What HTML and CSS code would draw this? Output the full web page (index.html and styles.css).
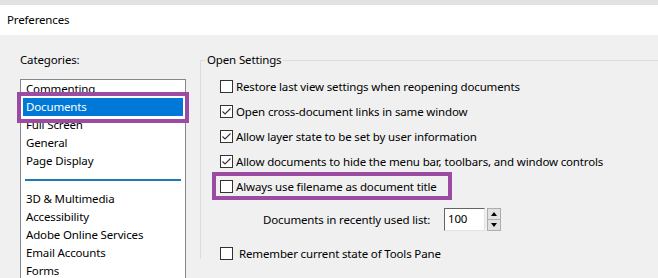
FILE: index.html
```html
<!DOCTYPE html>
<html lang="en">
<head>
    <meta charset="UTF-8">
    <meta name="viewport" content="width=device-width, initial-scale=1.0">
    <title>Preferences</title>
    <link rel="stylesheet" href="styles.css">
</head>
<body>
    <div class="top-strip"></div>
    <div class="title-bar">Preferences</div>

    <div class="dialog">
        <div class="categories">
            <div class="cat-label">Categories:</div>
            <ul class="cat-list">
                <li>Commenting</li>
                <li class="selected">Documents</li>
                <li>Full Screen</li>
                <li>General</li>
                <li>Page Display</li>
                <li class="sep"></li>
                <li>3D &amp; Multimedia</li>
                <li>Accessibility</li>
                <li>Adobe Online Services</li>
                <li>Email Accounts</li>
                <li>Forms</li>
            </ul>
        </div>

        <fieldset class="group">
            <legend>Open Settings</legend>

            <label class="row">
                <span class="box"></span>
                <span>Restore last view settings when reopening documents</span>
            </label>
            <label class="row">
                <span class="box"><svg width="11" height="11" viewBox="0 0 11 11"><polyline points="1.5,5.5 4,8 9.5,2.5" fill="none" stroke="#333" stroke-width="1.1"/></svg></span>
                <span>Open cross-document links in same window</span>
            </label>
            <label class="row">
                <span class="box"><svg width="11" height="11" viewBox="0 0 11 11"><polyline points="1.5,5.5 4,8 9.5,2.5" fill="none" stroke="#333" stroke-width="1.1"/></svg></span>
                <span>Allow layer state to be set by user information</span>
            </label>
            <label class="row">
                <span class="box"><svg width="11" height="11" viewBox="0 0 11 11"><polyline points="1.5,5.5 4,8 9.5,2.5" fill="none" stroke="#333" stroke-width="1.1"/></svg></span>
                <span>Allow documents to hide the menu bar, toolbars, and window controls</span>
            </label>
            <label class="row marked">
                <span class="box"></span>
                <span>Always use filename as document title</span>
            </label>

            <div class="count-row">
                <span class="count-label">Documents in recently used list:</span>
                <span class="count-input">100</span>
                <span class="spinner">
                    <span class="spin up"></span>
                    <span class="spin down"></span>
                </span>
            </div>

            <label class="row tools-row">
                <span class="box"></span>
                <span>Remember current state of Tools Pane</span>
            </label>
        </fieldset>
    </div>
</body>
</html>
```

FILE: styles.css
```css
body { margin: 0; font-family: "Noto Sans", "Open Sans", sans-serif; font-size: 11.5px; letter-spacing: -0.15px; color: #000; background-color: #f0f0f0; overflow: hidden; }

.top-strip { height: 5px; background-color: #e2e2e2; }
.title-bar { height: 30px; line-height: 30px; padding-left: 7px; background-color: #fff; font-size: 11.5px; }

.dialog { display: flex; padding: 17px 0 0 20px; }

.categories { width: 166px; flex-shrink: 0; }
.cat-label { line-height: 16px; margin-bottom: 11px; }
.cat-list { list-style: none; margin: 0; padding: 0; height: 200px; background-color: #fff; border: 1px solid #828790; }
.cat-list li { height: 18px; line-height: 18px; margin: 0 2px; padding-left: 3px; }
.cat-list li.selected { position: relative; background-color: #0078d7; color: #fff; }
.cat-list li.selected::after { content: ""; position: absolute; left: -6px; right: -6px; top: -6px; bottom: -7px; border: 4px solid #9c4ba3; }
.cat-list li.sep { height: 20px; display: flex; align-items: center; margin: 0 4px 0 4px; padding: 0; }
.cat-list li.sep::before { content: ""; flex: 1; height: 2px; background-color: #1c7bb0; }

.group { margin: 0 0 0 14px; padding: 6px 0 0 0; width: 520px; height: 200px; border: 1px solid #dcdcdc; border-right: none; border-bottom: none; }
.group legend { margin-left: 4px; padding: 0 2px; line-height: 16px; }

.row { display: flex; align-items: center; height: 25px; padding-left: 19px; gap: 3px; }
.box { width: 11px; height: 11px; border: 1px solid #333; background-color: #fff; display: flex; }
.marked { position: relative; }
.marked::after { content: ""; position: absolute; left: 11px; top: -2px; width: 232px; height: 20px; border: 4px solid #9c4ba3; }

.count-row { display: flex; align-items: center; height: 23px; margin-top: 9px; padding-left: 62px; }
.count-label { width: 181px; }
.count-input { width: 36px; height: 21px; line-height: 20px; padding-left: 3px; background-color: #fff; border: 1px solid; border-color: #646464 #e3e3e3 #e3e3e3 #646464; }
.spinner { display: flex; flex-direction: column; margin-left: 2px; height: 23px; }
.spin { width: 12px; flex: 1; background-color: #e1e1e1; border: 1px solid #adadad; position: relative; }
.spin.up { border-bottom: none; }
.spin::after { content: ""; position: absolute; left: 3px; border-left: 3px solid transparent; border-right: 3px solid transparent; }
.spin.up::after { top: 3px; border-bottom: 4px solid #000; }
.spin.down::after { top: 3px; border-top: 4px solid #000; }

.tools-row { margin-top: 10px; gap: 6px; }
```
